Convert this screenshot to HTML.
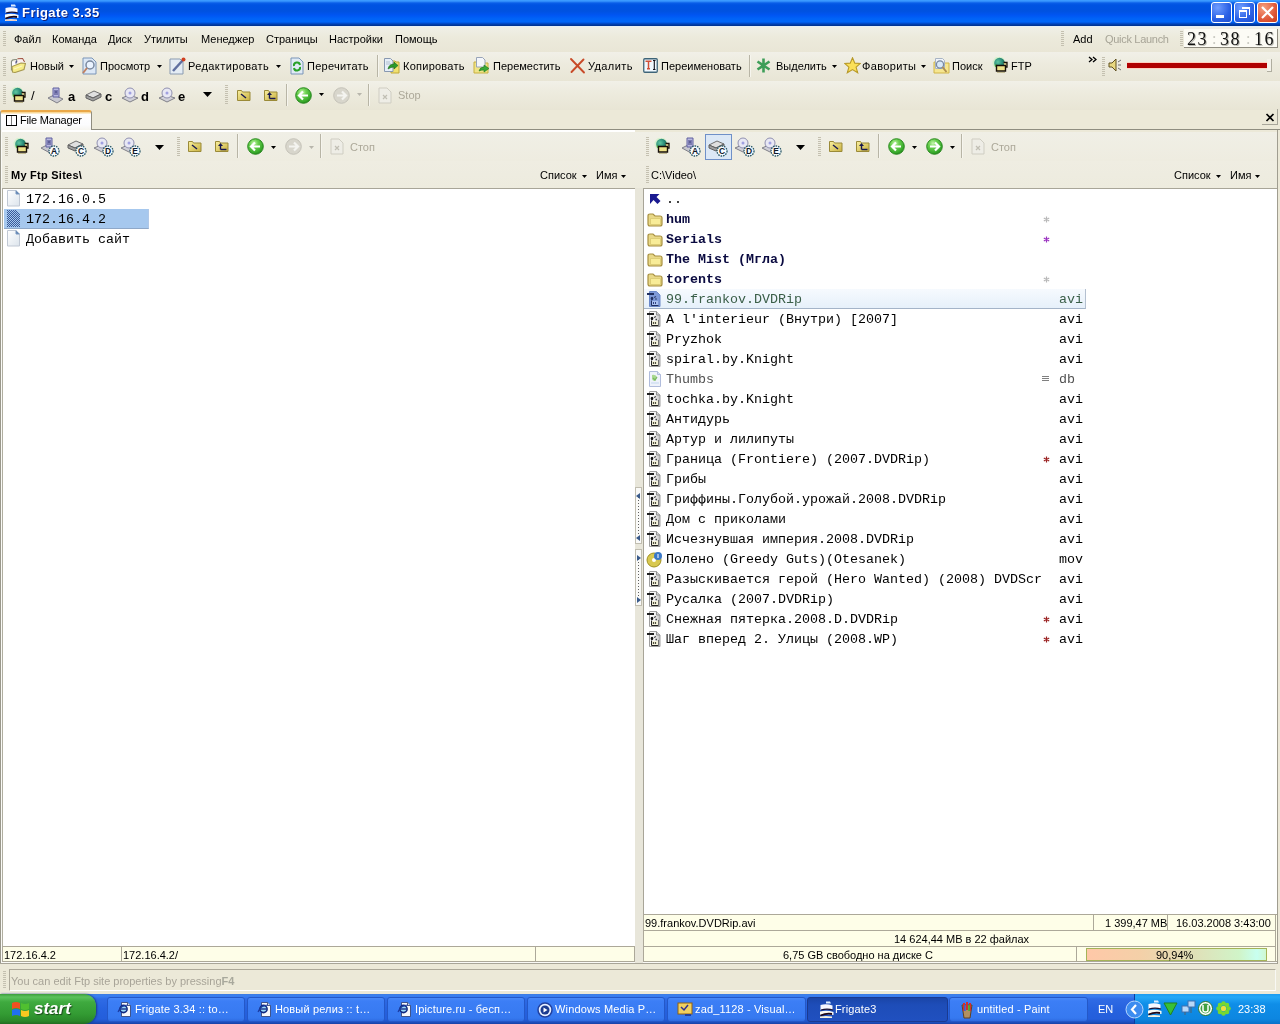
<!DOCTYPE html><html><head><meta charset="utf-8"><style>
*{margin:0;padding:0;box-sizing:border-box}
html,body{-webkit-font-smoothing:antialiased;width:1280px;height:1024px;overflow:hidden;background:#ECE9D8;font-family:"Liberation Sans",sans-serif;font-size:11px;color:#000;position:relative}
div,span,svg{position:absolute}
.t{white-space:pre;line-height:13px;will-change:transform}
.grip{width:3px;background:repeating-linear-gradient(#C4C0B0 0 1px,transparent 1px 2px)}
.sep{width:2px;border-left:1px solid #B8B5A6;border-right:1px solid #F6F5EE}
.mono{will-change:transform;font-family:"Liberation Mono",monospace;font-size:13.33px;line-height:20px;white-space:pre;padding-top:1px}
.it{height:20px}
</style></head><body><div style="left:0;top:0;width:1280px;height:26px;background:linear-gradient(#3D9CFF 0px,#3A98FF 1px,#0A5EE8 3px,#0053E2 5px,#0052E0 11px,#0055F2 15px,#0064F8 19px,#0066F8 22px,#0050D8 23px,#00389C 25px,#003090 26px)"></div><div style="left:0;top:26px;width:1280px;height:1px;background:#E6F0F6"></div><svg style="left:2px;top:3px" width="17" height="18" viewBox="0 0 17 18"><path d="M9 1.5h4l1 2H9z" fill="#DDEEFF"/><path d="M3.5 5q6-1.5 12 .5v4.5q-6-1.5-12 0z" fill="#F8F8FF"/><path d="M4 10q6-1.8 12 0" stroke="#1A1030" stroke-width="1.3" fill="none"/><path d="M3 11.5q7-1.5 13.5 .5v3q-7-1.5-13.5 0z" fill="#FAFAF4"/><path d="M3.5 15.5q6-2.5 11.5-1.5" stroke="#200818" stroke-width="1.8" fill="none"/><path d="M3 16.5q6-1 12 0v1.5H3z" fill="#F4F0E0"/><path d="M3.5 17.2h11" stroke="#E0A0A0" stroke-width=".6"/></svg><div class="t" style="left:22px;top:6px;font-weight:bold;font-size:13px;color:#fff;text-shadow:1px 1px 0 #0F1F77;letter-spacing:0.45px">Frigate 3.35</div><div style="left:1211px;top:2px;width:21px;height:21px;border:1px solid #fff;border-radius:3px;background:radial-gradient(circle at 30% 25%,#6F9DFF,#2B61E5 60%,#1E4FCF)"></div><div style="left:1234px;top:2px;width:21px;height:21px;border:1px solid #fff;border-radius:3px;background:radial-gradient(circle at 30% 25%,#6F9DFF,#2B61E5 60%,#1E4FCF)"></div><div style="left:1257px;top:2px;width:21px;height:21px;border:1px solid #fff;border-radius:3px;background:radial-gradient(circle at 30% 25%,#F5A07F,#E0593A 60%,#C73B1A)"></div><div style="left:1216px;top:15px;width:8px;height:3px;background:#fff"></div><div style="left:1239px;top:10px;width:8px;height:8px;border:1px solid #fff;border-top-width:2px"></div><div style="left:1242px;top:7px;width:8px;height:8px;border:1px solid #fff;border-top-width:2px;border-left:none;border-bottom:none"></div><svg style="left:1257px;top:2px" width="21" height="21"><path d="M5 5L16 16M16 5L5 16" stroke="#fff" stroke-width="2.2"/></svg><div style="left:0;top:27px;width:1280px;height:25px;background:linear-gradient(#F0EFE8,#ECEADC 40%,#E9E6D6)"></div><div style="left:0;top:52px;width:1280px;height:29px;background:linear-gradient(#F1F0E8,#EDEBDE 40%,#E8E5D5)"></div><div style="left:0;top:81px;width:1280px;height:29px;background:linear-gradient(#F1F0E8,#EDEBDE 40%,#E8E5D5)"></div><div class="grip" style="left:3px;top:31px;height:15px"></div><div class="t" style="left:14px;top:33px;">Файл</div><div class="t" style="left:52px;top:33px;">Команда</div><div class="t" style="left:108px;top:33px;">Диск</div><div class="t" style="left:144px;top:33px;">Утилиты</div><div class="t" style="left:201px;top:33px;">Менеджер</div><div class="t" style="left:266px;top:33px;">Страницы</div><div class="t" style="left:329px;top:33px;">Настройки</div><div class="t" style="left:395px;top:33px;">Помощь</div><div class="grip" style="left:1061px;top:31px;height:15px"></div><div class="t" style="left:1073px;top:33px;">Add</div><div class="t" style="left:1105px;top:33px;color:#A7A497;letter-spacing:-0.3px">Quick Launch</div><div class="grip" style="left:1180px;top:31px;height:15px"></div><div style="left:1184px;top:29px;width:94px;height:19px;background:#FCFBF5;border-right:1px solid #8F8C80;border-bottom:1px solid #8F8C80"></div><div class="t" style="left:1187px;top:30px;font-family:'Liberation Serif',serif;font-size:18px;line-height:18px;letter-spacing:1.5px;color:#111;text-shadow:1px 1px 0 #B8B8B0">23</div><div class="t" style="left:1220px;top:30px;font-family:'Liberation Serif',serif;font-size:18px;line-height:18px;letter-spacing:1.5px;color:#111;text-shadow:1px 1px 0 #B8B8B0">38</div><div class="t" style="left:1254px;top:30px;font-family:'Liberation Serif',serif;font-size:18px;line-height:18px;letter-spacing:1.5px;color:#111;text-shadow:1px 1px 0 #B8B8B0">16</div><div class="t" style="left:1212px;top:30px;font-family:'Liberation Serif',serif;font-size:16px;line-height:18px;color:#C8C8C0">:</div><div class="t" style="left:1246px;top:30px;font-family:'Liberation Serif',serif;font-size:16px;line-height:18px;color:#C8C8C0">:</div><div class="grip" style="left:3px;top:57px;height:19px"></div><svg style="left:8px;top:55px" width="18" height="18" viewBox="0 0 18 18"><path d="M3.5 15.5V6.5Q4 4.5 7 4.5h2" fill="none" stroke="#8A9080" stroke-width="1.2"/><path d="M4 6.5h5v6H4z" fill="#FCFCFF"/><path d="M8 8.5q0-2 1-3" stroke="#5A5A88" stroke-width="1.5" fill="none"/><path d="M9.5 3.8l5-.3 2 3.5" stroke="#A05040" stroke-width="1.2" fill="none"/><path d="M10 4.5h4.5l1.5 3-6 1z" fill="#FAF0F0"/><path d="M4.5 17L4 11.5l9-3.5 4.5 0.5-1.5 6-9 3z" fill="#F6EC88" stroke="#A89A50" stroke-width="1.1"/><path d="M6 14l8-3" stroke="#FCF8C0" stroke-width="1.2"/></svg><div class="t" style="left:30px;top:60px;">Новый</div><svg style="left:69px;top:65px" width="5" height="3" viewBox="0 0 5 3"><path d="M0 0H5L2.5 3Z" fill="#000"/></svg><svg style="left:82px;top:57px" width="16" height="18" viewBox="0 0 16 18"><path d="M1 1h9l4 4v12H1z" fill="#DCE8F6" stroke="#7A95B8"/><circle cx="8" cy="8" r="4" fill="#EAF3FF" stroke="#7A8AA0" stroke-width="1.5"/><path d="M5 11L1 16" stroke="#C08060" stroke-width="2"/></svg><div class="t" style="left:100px;top:60px;">Просмотр</div><svg style="left:157px;top:65px" width="5" height="3" viewBox="0 0 5 3"><path d="M0 0H5L2.5 3Z" fill="#000"/></svg><svg style="left:169px;top:57px" width="17" height="18" viewBox="0 0 17 18"><path d="M1 2h10l3 3v12H1z" fill="#E4ECF4" stroke="#8A9AB0"/><path d="M4 14L14 3" stroke="#6070A0" stroke-width="2.5"/><circle cx="14.5" cy="2.5" r="2" fill="#D04020"/></svg><div class="t" style="left:188px;top:60px;letter-spacing:0.4px">Редактировать</div><svg style="left:276px;top:65px" width="5" height="3" viewBox="0 0 5 3"><path d="M0 0H5L2.5 3Z" fill="#000"/></svg><svg style="left:290px;top:57px" width="14" height="18" viewBox="0 0 14 18"><path d="M1 1h8l4 4v12H1z" fill="#E0EAF4" stroke="#7A95B8"/><path d="M4 9a3 3 0 0 1 6-1" stroke="#28A028" stroke-width="2" fill="none"/><path d="M10 10a3 3 0 0 1-6 1" stroke="#28A028" stroke-width="2" fill="none"/></svg><div class="t" style="left:307px;top:60px;letter-spacing:0.25px">Перечитать</div><div class="sep" style="left:377px;top:55px;height:22px"></div><svg style="left:383px;top:57px" width="17" height="17" viewBox="0 0 17 17"><path d="M8 4h4l1 1h3v11H8z" fill="#F0E070" stroke="#C0A838"/><path d="M1.5 1.5h6l2.5 2.5v10.5H1.5z" fill="#E6EEF8" stroke="#8898B0"/><path d="M3 5h4M3 7h5" stroke="#B0C0D0"/><path d="M5 12q1-5 6-5V5l4 3.5-4 3.5v-2q-3 0-6 2z" fill="#2A9A2A" stroke="#1A6A1A" stroke-width=".6"/></svg><div class="t" style="left:403px;top:60px;letter-spacing:0.25px">Копировать</div><svg style="left:473px;top:57px" width="17" height="17" viewBox="0 0 17 17"><path d="M1 5h5l1 1h8v10H1z" fill="#F0E488" stroke="#C8B040"/><path d="M3.5 0.5h6l2.5 2.5v7H3.5z" fill="#F4F6FA" stroke="#98A4B8"/><path d="M6 14q1-4 5-4V8l5 3.5-5 3.5v-2q-3 0-5 1z" fill="#3AA83A" stroke="#1A7A1A" stroke-width=".6"/></svg><div class="t" style="left:493px;top:60px;">Переместить</div><svg style="left:569px;top:57px" width="17" height="17" viewBox="0 0 17 17"><path d="M2 2L15 15.5M14.5 2.5L2.5 15" stroke="#C84A28" stroke-width="1.9" stroke-linecap="round"/></svg><div class="t" style="left:588px;top:60px;letter-spacing:0.4px">Удалить</div><svg style="left:643px;top:58px" width="15" height="15" viewBox="0 0 15 15"><rect x="0.75" y="0.75" width="13.5" height="13.5" rx="1" fill="#F0F8FE" stroke="#3E6478" stroke-width="1.3"/><path d="M2.5 3.2h6M5.5 3.2v7.5M4 10.7h3" stroke="#D05038" stroke-width="1.5"/><path d="M10 2.5h2.5M10 11.5h2.5M11.3 2.5v9" stroke="#101018" stroke-width="1.1"/></svg><div class="t" style="left:661px;top:60px;">Переименовать</div><div class="sep" style="left:749px;top:55px;height:22px"></div><svg style="left:756px;top:58px" width="16" height="15" viewBox="0 0 16 15"><path d="M7.5 0.5V14.5M1.5 3.5L13.5 11.5M13.5 3.5L1.5 11.5" stroke="#3E9E58" stroke-width="2.6"/></svg><div class="t" style="left:776px;top:60px;">Выделить</div><svg style="left:832px;top:65px" width="5" height="3" viewBox="0 0 5 3"><path d="M0 0H5L2.5 3Z" fill="#000"/></svg><svg style="left:844px;top:57px" width="17" height="17" viewBox="0 0 17 17"><path d="M8.5 0.8l2.3 5.3 5.6.3-4.3 3.7 1.6 5.7-5.2-3.2-5.2 3.2 1.6-5.7-4.3-3.7 5.6-.3z" fill="#FBE058" stroke="#B89A28" stroke-width="1.1"/></svg><div class="t" style="left:862px;top:60px;letter-spacing:0.35px">Фавориты</div><svg style="left:921px;top:65px" width="5" height="3" viewBox="0 0 5 3"><path d="M0 0H5L2.5 3Z" fill="#000"/></svg><svg style="left:933px;top:57px" width="17" height="17" viewBox="0 0 17 17"><path d="M1 5h4l1 1h10v10H1z" fill="#F6E690" stroke="#D0B448"/><path d="M2.5 1.5h7l2 2v8h-9z" fill="#F0F4FA" stroke="#A8B4C4"/><circle cx="7" cy="7.5" r="3.6" fill="#D8E8F8" stroke="#7888A0" stroke-width="1.3"/><path d="M9.5 10l4 5" stroke="#B09050" stroke-width="2"/></svg><div class="t" style="left:952px;top:60px;">Поиск</div><svg style="left:992px;top:57px" width="17" height="17" viewBox="0 0 17 17"><defs><radialGradient id="glb" cx="35%" cy="40%" r="70%"><stop offset="0" stop-color="#60C8A0"/><stop offset="0.6" stop-color="#2A8A78"/><stop offset="1" stop-color="#1A6A50"/></radialGradient></defs><circle cx="7" cy="6" r="6.5" fill="#C8F4C0" opacity=".6"/><circle cx="7.5" cy="6" r="5.3" fill="url(#glb)"/><path d="M3 8q2 1 3 3" stroke="#50B040" stroke-width="2" fill="none"/><path d="M11.5 5.5h3.5v4.5h-2" fill="#F4E8A0" stroke="#181008" stroke-width="1.3"/><path d="M4.5 8.5h9v5.5h-9z" fill="#EEE28A" stroke="#181008" stroke-width="1.4"/><path d="M5 15.5h8" stroke="#C0B890" stroke-width="1"/></svg><div class="t" style="left:1011px;top:60px;">FTP</div><svg style="left:1088px;top:56px" width="9" height="7" viewBox="0 0 9 7"><path d="M1 1l3 2.5-3 2.5M5 1l3 2.5-3 2.5" stroke="#000" stroke-width="1.3" fill="none"/></svg><div class="grip" style="left:1102px;top:57px;height:19px"></div><svg style="left:1108px;top:58px" width="14" height="14" viewBox="0 0 14 14"><path d="M1 5h3l4-4v12l-4-4H1z" fill="#E8D880" stroke="#605020"/><path d="M10 4l3-2M10 7h3M10 10l3 2" stroke="#707070"/></svg><div style="left:1127px;top:62px;width:141px;height:7px;background:#B00000;border-top:1px solid #FFD0C0;border-bottom:1px solid #FFD0C0"></div><div style="left:1267px;top:59px;width:5px;height:13px;background:#F4F2EA;border-right:1px solid #B0AEA0;border-bottom:1px solid #B0AEA0"></div><div class="grip" style="left:3px;top:85px;height:19px"></div><svg style="left:10px;top:87px" width="17" height="17" viewBox="0 0 17 17"><defs><radialGradient id="glb" cx="35%" cy="40%" r="70%"><stop offset="0" stop-color="#60C8A0"/><stop offset="0.6" stop-color="#2A8A78"/><stop offset="1" stop-color="#1A6A50"/></radialGradient></defs><circle cx="7" cy="6" r="6.5" fill="#C8F4C0" opacity=".6"/><circle cx="7.5" cy="6" r="5.3" fill="url(#glb)"/><path d="M3 8q2 1 3 3" stroke="#50B040" stroke-width="2" fill="none"/><path d="M11.5 5.5h3.5v4.5h-2" fill="#F4E8A0" stroke="#181008" stroke-width="1.3"/><path d="M4.5 8.5h9v5.5h-9z" fill="#EEE28A" stroke="#181008" stroke-width="1.4"/><path d="M5 15.5h8" stroke="#C0B890" stroke-width="1"/></svg><div class="t" style="left:31px;top:89px;font-size:13px;font-weight:300">/</div><svg style="left:47px;top:87px" width="17" height="17" viewBox="0 0 17 17"><path d="M1 11l6-3 9 4-6 4z" fill="#C8C8D0" stroke="#808088"/><path d="M6 1h6v9H6z" fill="#B8B8E0" stroke="#6060A0"/><path d="M8 3v5M10 3v5M8 5h2" stroke="#404080"/></svg><div class="t" style="left:68px;top:90px;font-weight:bold;font-size:13px">a</div><svg style="left:85px;top:87px" width="17" height="17" viewBox="0 0 17 17"><path d="M1 8l8-4 7 3-8 4z" fill="#E0E0E0" stroke="#707070"/><path d="M1 8v3l7 3 8-4V7l-8 4z" fill="#A0A0A0" stroke="#606060"/></svg><div class="t" style="left:105px;top:90px;font-weight:bold;font-size:13px">c</div><svg style="left:121px;top:87px" width="18" height="17" viewBox="0 0 18 17"><path d="M1 11l7-3 9 3-8 4z" fill="#D0D0D8" stroke="#808088"/><ellipse cx="9" cy="6" rx="5" ry="5" fill="#E8E8F4" stroke="#9090B0"/><circle cx="9" cy="6" r="1.5" fill="#A0A0E0"/></svg><div class="t" style="left:141px;top:90px;font-weight:bold;font-size:13px">d</div><svg style="left:158px;top:87px" width="18" height="17" viewBox="0 0 18 17"><path d="M1 11l7-3 9 3-8 4z" fill="#D0D0D8" stroke="#808088"/><ellipse cx="9" cy="6" rx="5" ry="5" fill="#E8E8F4" stroke="#9090B0"/><circle cx="9" cy="6" r="1.5" fill="#A0A0E0"/></svg><div class="t" style="left:178px;top:90px;font-weight:bold;font-size:13px">e</div><svg style="left:203px;top:92px" width="9" height="5" viewBox="0 0 9 5"><path d="M0 0H9L4.5 5Z" fill="#000"/></svg><div class="grip" style="left:225px;top:85px;height:19px"></div><svg style="left:236px;top:88px" width="16" height="14" viewBox="0 0 16 14"><defs><linearGradient id="yf" x1="0" y1="0" x2="1" y2="1"><stop offset="0" stop-color="#FAF0A0"/><stop offset="1" stop-color="#C8B040"/></linearGradient></defs><path d="M1.5 2.5h4l1 1.5h7.5v8.5h-12.5z" fill="url(#yf)" stroke="#9A8A38"/><path d="M5 6l5 4" stroke="#181850" stroke-width="1.5"/></svg><svg style="left:263px;top:88px" width="16" height="14" viewBox="0 0 16 14"><path d="M1.5 2.5h4l1 1.5h7.5v8.5h-12.5z" fill="url(#yf)" stroke="#9A8A38"/><path d="M6.5 10.5h6M6.5 10.5V6" stroke="#181850" stroke-width="1.4" fill="none"/><path d="M4 7l2.5-3 2.5 3z" fill="#181850"/></svg><div class="sep" style="left:286px;top:84px;height:22px"></div><svg style="left:295px;top:87px" width="17" height="17" viewBox="0 0 17 17"><defs><radialGradient id="gb" cx="40%" cy="30%" r="75%"><stop offset="0" stop-color="#C8F8B0"/><stop offset="0.35" stop-color="#6CD050"/><stop offset="0.8" stop-color="#36A82A"/><stop offset="1" stop-color="#207A18"/></radialGradient></defs><circle cx="8.5" cy="8.5" r="7.8" fill="url(#gb)" stroke="#2A8A20"/><path d="M13 8.5H4M8 4.5l-4 4 4 4" stroke="#fff" stroke-width="2.2" fill="none"/></svg><svg style="left:319px;top:93px" width="5" height="3" viewBox="0 0 5 3"><path d="M0 0H5L2.5 3Z" fill="#000"/></svg><svg style="left:333px;top:87px" width="17" height="17" viewBox="0 0 17 17"><circle cx="8.5" cy="8.5" r="7.8" fill="#D8D6CC" stroke="#C4C2B8"/><path d="M4 8.5h9M9 4.5l4 4-4 4" stroke="#F4F4F0" stroke-width="2.2" fill="none"/></svg><svg style="left:357px;top:93px" width="5" height="3" viewBox="0 0 5 3"><path d="M0 0H5L2.5 3Z" fill="#B8B6AC"/></svg><div class="sep" style="left:368px;top:84px;height:22px"></div><svg style="left:378px;top:87px" width="14" height="17" viewBox="0 0 14 17"><path d="M1 1h8l4 4v11H1z" fill="#EEEDE6" stroke="#CFCDC2"/><path d="M5 8l4 4M9 8l-4 4" stroke="#C0BEB4" stroke-width="1.2"/></svg><div class="t" style="left:398px;top:89px;color:#ACA899">Stop</div><div style="left:0;top:129px;width:1280px;height:1px;background:#8F8D80"></div><div style="left:0;top:110px;width:92px;height:20px;background:linear-gradient(#F8D898 0,#F8D898 1px,#FFFFFF 2px,#FCFCFE 70%,#F6F5F0);border-left:1px solid #919B9C;border-right:1px solid #8F8D80;border-top:2px solid #EAA848;border-radius:3px 3px 0 0"></div><div style="left:6px;top:115px;width:11px;height:11px;border:1px solid #000"></div><div style="left:11px;top:116px;width:1px;height:9px;background:#777"></div><div class="t" style="left:20px;top:114px;letter-spacing:-0.2px">File Manager</div><svg style="left:1264px;top:111px" width="12" height="12" viewBox="0 0 12 12"><path d="M2.5 3l7 7M9.5 3l-7 7" stroke="#000" stroke-width="1.7"/></svg><div style="left:1262px;top:109px;width:16px;height:16px;border-right:1px solid #A8A69A;border-bottom:1px solid #A8A69A"></div><div style="left:0;top:130px;width:1px;height:834px;background:#9A988C"></div><div style="left:1px;top:130px;width:1px;height:834px;background:#FAFAF6"></div><div style="left:2px;top:130px;width:633px;height:2px;background:#fff"></div><div style="left:2px;top:132px;width:1275px;height:29px;background:linear-gradient(#F0EFE6,#EEECE0)"></div><div style="left:2px;top:161px;width:1275px;height:27px;background:linear-gradient(#EFEDE2,#EDEBDE)"></div><div class="grip" style="left:5px;top:137px;height:19px"></div><svg style="left:13px;top:138px" width="17" height="17" viewBox="0 0 17 17"><defs><radialGradient id="glb" cx="35%" cy="40%" r="70%"><stop offset="0" stop-color="#60C8A0"/><stop offset="0.6" stop-color="#2A8A78"/><stop offset="1" stop-color="#1A6A50"/></radialGradient></defs><circle cx="7" cy="6" r="6.5" fill="#C8F4C0" opacity=".6"/><circle cx="7.5" cy="6" r="5.3" fill="url(#glb)"/><path d="M3 8q2 1 3 3" stroke="#50B040" stroke-width="2" fill="none"/><path d="M11.5 5.5h3.5v4.5h-2" fill="#F4E8A0" stroke="#181008" stroke-width="1.3"/><path d="M4.5 8.5h9v5.5h-9z" fill="#EEE28A" stroke="#181008" stroke-width="1.4"/><path d="M5 15.5h8" stroke="#C0B890" stroke-width="1"/></svg><svg style="left:40px;top:137px" width="17" height="17" viewBox="0 0 17 17"><path d="M1 11l6-3 9 4-6 4z" fill="#C8C8D0" stroke="#808088"/><path d="M6 1h6v9H6z" fill="#B8B8E0" stroke="#6060A0"/><path d="M8 3v5M10 3v5M8 5h2" stroke="#404080"/></svg><svg style="left:48px;top:145px" width="12" height="12" viewBox="0 0 12 12"><circle cx="6" cy="6" r="5" fill="#F8FCFF" stroke="#2A5868" stroke-width="1.3" stroke-dasharray="1.6 0.9"/><text x="6" y="9" font-family="Liberation Sans" font-weight="bold" font-size="8.5" text-anchor="middle" fill="#101828">A</text></svg><svg style="left:67px;top:137px" width="17" height="17" viewBox="0 0 17 17"><path d="M1 8l8-4 7 3-8 4z" fill="#E0E0E0" stroke="#707070"/><path d="M1 8v3l7 3 8-4V7l-8 4z" fill="#A0A0A0" stroke="#606060"/></svg><svg style="left:75px;top:145px" width="12" height="12" viewBox="0 0 12 12"><circle cx="6" cy="6" r="5" fill="#F8FCFF" stroke="#2A5868" stroke-width="1.3" stroke-dasharray="1.6 0.9"/><text x="6" y="9" font-family="Liberation Sans" font-weight="bold" font-size="8.5" text-anchor="middle" fill="#101828">C</text></svg><svg style="left:93px;top:137px" width="18" height="17" viewBox="0 0 18 17"><path d="M1 11l7-3 9 3-8 4z" fill="#D0D0D8" stroke="#808088"/><ellipse cx="9" cy="6" rx="5" ry="5" fill="#E8E8F4" stroke="#9090B0"/><circle cx="9" cy="6" r="1.5" fill="#A0A0E0"/></svg><svg style="left:102px;top:145px" width="12" height="12" viewBox="0 0 12 12"><circle cx="6" cy="6" r="5" fill="#F8FCFF" stroke="#2A5868" stroke-width="1.3" stroke-dasharray="1.6 0.9"/><text x="6" y="9" font-family="Liberation Sans" font-weight="bold" font-size="8.5" text-anchor="middle" fill="#101828">D</text></svg><svg style="left:120px;top:137px" width="18" height="17" viewBox="0 0 18 17"><path d="M1 11l7-3 9 3-8 4z" fill="#D0D0D8" stroke="#808088"/><ellipse cx="9" cy="6" rx="5" ry="5" fill="#E8E8F4" stroke="#9090B0"/><circle cx="9" cy="6" r="1.5" fill="#A0A0E0"/></svg><svg style="left:129px;top:145px" width="12" height="12" viewBox="0 0 12 12"><circle cx="6" cy="6" r="5" fill="#F8FCFF" stroke="#2A5868" stroke-width="1.3" stroke-dasharray="1.6 0.9"/><text x="6" y="9" font-family="Liberation Sans" font-weight="bold" font-size="8.5" text-anchor="middle" fill="#101828">E</text></svg><svg style="left:155px;top:145px" width="9" height="5" viewBox="0 0 9 5"><path d="M0 0H9L4.5 5Z" fill="#000"/></svg><div class="grip" style="left:177px;top:137px;height:19px"></div><svg style="left:187px;top:139px" width="16" height="14" viewBox="0 0 16 14"><defs><linearGradient id="yf" x1="0" y1="0" x2="1" y2="1"><stop offset="0" stop-color="#FAF0A0"/><stop offset="1" stop-color="#C8B040"/></linearGradient></defs><path d="M1.5 2.5h4l1 1.5h7.5v8.5h-12.5z" fill="url(#yf)" stroke="#9A8A38"/><path d="M5 6l5 4" stroke="#181850" stroke-width="1.5"/></svg><svg style="left:214px;top:139px" width="16" height="14" viewBox="0 0 16 14"><path d="M1.5 2.5h4l1 1.5h7.5v8.5h-12.5z" fill="url(#yf)" stroke="#9A8A38"/><path d="M6.5 10.5h6M6.5 10.5V6" stroke="#181850" stroke-width="1.4" fill="none"/><path d="M4 7l2.5-3 2.5 3z" fill="#181850"/></svg><div class="sep" style="left:237px;top:134px;height:24px"></div><svg style="left:247px;top:138px" width="17" height="17" viewBox="0 0 17 17"><defs><radialGradient id="gb" cx="40%" cy="30%" r="75%"><stop offset="0" stop-color="#C8F8B0"/><stop offset="0.35" stop-color="#6CD050"/><stop offset="0.8" stop-color="#36A82A"/><stop offset="1" stop-color="#207A18"/></radialGradient></defs><circle cx="8.5" cy="8.5" r="7.8" fill="url(#gb)" stroke="#2A8A20"/><path d="M13 8.5H4M8 4.5l-4 4 4 4" stroke="#fff" stroke-width="2.2" fill="none"/></svg><svg style="left:271px;top:146px" width="5" height="3" viewBox="0 0 5 3"><path d="M0 0H5L2.5 3Z" fill="#000"/></svg><svg style="left:285px;top:138px" width="17" height="17" viewBox="0 0 17 17"><circle cx="8.5" cy="8.5" r="7.8" fill="#D8D6CC" stroke="#C4C2B8"/><path d="M4 8.5h9M9 4.5l4 4-4 4" stroke="#F4F4F0" stroke-width="2.2" fill="none"/></svg><svg style="left:309px;top:146px" width="5" height="3" viewBox="0 0 5 3"><path d="M0 0H5L2.5 3Z" fill="#B8B6AC"/></svg><div class="sep" style="left:320px;top:134px;height:24px"></div><svg style="left:330px;top:138px" width="14" height="17" viewBox="0 0 14 17"><path d="M1 1h8l4 4v11H1z" fill="#EEEDE6" stroke="#CFCDC2"/><path d="M5 8l4 4M9 8l-4 4" stroke="#C0BEB4" stroke-width="1.2"/></svg><div class="t" style="left:350px;top:141px;color:#ACA899">Стоп</div><div class="grip" style="left:5px;top:166px;height:17px"></div><div class="t" style="left:11px;top:169px;font-weight:bold;letter-spacing:0.25px">My Ftp Sites\</div><div class="t" style="left:540px;top:169px;">Список</div><svg style="left:582px;top:175px" width="5" height="3" viewBox="0 0 5 3"><path d="M0 0H5L2.5 3Z" fill="#000"/></svg><div class="t" style="left:596px;top:169px;">Имя</div><svg style="left:621px;top:175px" width="5" height="3" viewBox="0 0 5 3"><path d="M0 0H5L2.5 3Z" fill="#000"/></svg><div style="left:2px;top:188px;width:633px;height:758px;background:#fff;border-top:1px solid #A8A598;border-left:1px solid #B0AEA0"></div><div style="left:4px;top:209px;width:145px;height:20px;background:#A6C8EE;border-bottom:1px solid #8FA8C8;border-right:1px solid #B0C8E8"></div><svg style="left:7px;top:190px" width="14" height="17" viewBox="0 0 14 17"><defs><linearGradient id="fg" x1="0" y1="0" x2="1" y2="1"><stop offset="0" stop-color="#fff"/><stop offset="1" stop-color="#DCE4EC"/></linearGradient></defs><path d="M0.5 0.5h8.5l3.5 3.5v12h-12z" fill="url(#fg)" stroke="#C0C8D4"/><path d="M9 0.5v3.5h3.5" fill="#5A80B0" stroke="#7A98C0"/></svg><div class="mono" style="left:26px;top:189px">172.16.0.5</div><svg style="left:7px;top:210px" width="14" height="17" viewBox="0 0 14 17"><defs><pattern id="dth" width="2" height="2" patternUnits="userSpaceOnUse"><rect width="1" height="1" fill="#3A5A9A"/><rect x="1" y="1" width="1" height="1" fill="#3A5A9A"/></pattern></defs><path d="M0 0h9l4 4v13H0z" fill="url(#dth)"/></svg><div class="mono" style="left:26px;top:209px">172.16.4.2</div><svg style="left:7px;top:230px" width="14" height="17" viewBox="0 0 14 17"><defs><linearGradient id="fg" x1="0" y1="0" x2="1" y2="1"><stop offset="0" stop-color="#fff"/><stop offset="1" stop-color="#DCE4EC"/></linearGradient></defs><path d="M0.5 0.5h8.5l3.5 3.5v12h-12z" fill="url(#fg)" stroke="#C0C8D4"/><path d="M9 0.5v3.5h3.5" fill="#5A80B0" stroke="#7A98C0"/></svg><div class="mono" style="left:26px;top:229px">Добавить сайт</div><div style="left:2px;top:946px;width:633px;height:16px;background:#FEFEE8;border-top:1px solid #ACA899;border-bottom:1px solid #ACA899;border-left:1px solid #ACA899"></div><div style="left:121px;top:947px;width:1px;height:14px;background:#ACA899"></div><div style="left:535px;top:947px;width:1px;height:14px;background:#ACA899"></div><div style="left:634px;top:946px;width:1px;height:16px;background:#ACA899"></div><div class="t" style="left:4px;top:949px;">172.16.4.2</div><div class="t" style="left:123px;top:949px;">172.16.4.2/</div><div style="left:1px;top:962px;width:1277px;height:1px;background:#FAFAF6"></div><div style="left:0;top:963px;width:1278px;height:1px;background:#A8A598"></div><div style="left:635px;top:188px;width:8px;height:775px;background:#E8E6DA"></div><div style="left:635px;top:487px;width:7px;height:57px;background:#FAFAF8;border:1px solid #C0BDB0"></div><div style="left:638px;top:497px;width:1px;height:37px;background:repeating-linear-gradient(#606060 0 1px,transparent 1px 3px)"></div><div style="left:635px;top:549px;width:7px;height:57px;background:#FAFAF8;border:1px solid #C0BDB0"></div><div style="left:638px;top:559px;width:1px;height:37px;background:repeating-linear-gradient(#606060 0 1px,transparent 1px 3px)"></div><svg style="left:636px;top:493px" width="5" height="6" viewBox="0 0 5 6"><path d="M4 0v6L0 3z" fill="#3A5A8A"/></svg><svg style="left:636px;top:535px" width="5" height="6" viewBox="0 0 5 6"><path d="M4 0v6L0 3z" fill="#3A5A8A"/></svg><svg style="left:637px;top:555px" width="5" height="6" viewBox="0 0 5 6"><path d="M0 0v6l4-3z" fill="#3A5A8A"/></svg><svg style="left:637px;top:597px" width="5" height="6" viewBox="0 0 5 6"><path d="M0 0v6l4-3z" fill="#3A5A8A"/></svg><div style="left:1277px;top:130px;width:1px;height:834px;background:#A09D90"></div><div class="grip" style="left:646px;top:137px;height:19px"></div><svg style="left:654px;top:138px" width="17" height="17" viewBox="0 0 17 17"><defs><radialGradient id="glb" cx="35%" cy="40%" r="70%"><stop offset="0" stop-color="#60C8A0"/><stop offset="0.6" stop-color="#2A8A78"/><stop offset="1" stop-color="#1A6A50"/></radialGradient></defs><circle cx="7" cy="6" r="6.5" fill="#C8F4C0" opacity=".6"/><circle cx="7.5" cy="6" r="5.3" fill="url(#glb)"/><path d="M3 8q2 1 3 3" stroke="#50B040" stroke-width="2" fill="none"/><path d="M11.5 5.5h3.5v4.5h-2" fill="#F4E8A0" stroke="#181008" stroke-width="1.3"/><path d="M4.5 8.5h9v5.5h-9z" fill="#EEE28A" stroke="#181008" stroke-width="1.4"/><path d="M5 15.5h8" stroke="#C0B890" stroke-width="1"/></svg><svg style="left:681px;top:137px" width="17" height="17" viewBox="0 0 17 17"><path d="M1 11l6-3 9 4-6 4z" fill="#C8C8D0" stroke="#808088"/><path d="M6 1h6v9H6z" fill="#B8B8E0" stroke="#6060A0"/><path d="M8 3v5M10 3v5M8 5h2" stroke="#404080"/></svg><svg style="left:689px;top:145px" width="12" height="12" viewBox="0 0 12 12"><circle cx="6" cy="6" r="5" fill="#F8FCFF" stroke="#2A5868" stroke-width="1.3" stroke-dasharray="1.6 0.9"/><text x="6" y="9" font-family="Liberation Sans" font-weight="bold" font-size="8.5" text-anchor="middle" fill="#101828">A</text></svg><div style="left:705px;top:134px;width:27px;height:26px;background:#DCE8F6;border:1px solid #6F90C8"></div><svg style="left:708px;top:137px" width="17" height="17" viewBox="0 0 17 17"><path d="M1 8l8-4 7 3-8 4z" fill="#E0E0E0" stroke="#707070"/><path d="M1 8v3l7 3 8-4V7l-8 4z" fill="#A0A0A0" stroke="#606060"/></svg><svg style="left:716px;top:145px" width="12" height="12" viewBox="0 0 12 12"><circle cx="6" cy="6" r="5" fill="#F8FCFF" stroke="#2A5868" stroke-width="1.3" stroke-dasharray="1.6 0.9"/><text x="6" y="9" font-family="Liberation Sans" font-weight="bold" font-size="8.5" text-anchor="middle" fill="#101828">C</text></svg><svg style="left:734px;top:137px" width="18" height="17" viewBox="0 0 18 17"><path d="M1 11l7-3 9 3-8 4z" fill="#D0D0D8" stroke="#808088"/><ellipse cx="9" cy="6" rx="5" ry="5" fill="#E8E8F4" stroke="#9090B0"/><circle cx="9" cy="6" r="1.5" fill="#A0A0E0"/></svg><svg style="left:743px;top:145px" width="12" height="12" viewBox="0 0 12 12"><circle cx="6" cy="6" r="5" fill="#F8FCFF" stroke="#2A5868" stroke-width="1.3" stroke-dasharray="1.6 0.9"/><text x="6" y="9" font-family="Liberation Sans" font-weight="bold" font-size="8.5" text-anchor="middle" fill="#101828">D</text></svg><svg style="left:761px;top:137px" width="18" height="17" viewBox="0 0 18 17"><path d="M1 11l7-3 9 3-8 4z" fill="#D0D0D8" stroke="#808088"/><ellipse cx="9" cy="6" rx="5" ry="5" fill="#E8E8F4" stroke="#9090B0"/><circle cx="9" cy="6" r="1.5" fill="#A0A0E0"/></svg><svg style="left:770px;top:145px" width="12" height="12" viewBox="0 0 12 12"><circle cx="6" cy="6" r="5" fill="#F8FCFF" stroke="#2A5868" stroke-width="1.3" stroke-dasharray="1.6 0.9"/><text x="6" y="9" font-family="Liberation Sans" font-weight="bold" font-size="8.5" text-anchor="middle" fill="#101828">E</text></svg><svg style="left:796px;top:145px" width="9" height="5" viewBox="0 0 9 5"><path d="M0 0H9L4.5 5Z" fill="#000"/></svg><div class="grip" style="left:818px;top:137px;height:19px"></div><svg style="left:828px;top:139px" width="16" height="14" viewBox="0 0 16 14"><defs><linearGradient id="yf" x1="0" y1="0" x2="1" y2="1"><stop offset="0" stop-color="#FAF0A0"/><stop offset="1" stop-color="#C8B040"/></linearGradient></defs><path d="M1.5 2.5h4l1 1.5h7.5v8.5h-12.5z" fill="url(#yf)" stroke="#9A8A38"/><path d="M5 6l5 4" stroke="#181850" stroke-width="1.5"/></svg><svg style="left:855px;top:139px" width="16" height="14" viewBox="0 0 16 14"><path d="M1.5 2.5h4l1 1.5h7.5v8.5h-12.5z" fill="url(#yf)" stroke="#9A8A38"/><path d="M6.5 10.5h6M6.5 10.5V6" stroke="#181850" stroke-width="1.4" fill="none"/><path d="M4 7l2.5-3 2.5 3z" fill="#181850"/></svg><div class="sep" style="left:878px;top:134px;height:24px"></div><svg style="left:888px;top:138px" width="17" height="17" viewBox="0 0 17 17"><defs><radialGradient id="gb" cx="40%" cy="30%" r="75%"><stop offset="0" stop-color="#C8F8B0"/><stop offset="0.35" stop-color="#6CD050"/><stop offset="0.8" stop-color="#36A82A"/><stop offset="1" stop-color="#207A18"/></radialGradient></defs><circle cx="8.5" cy="8.5" r="7.8" fill="url(#gb)" stroke="#2A8A20"/><path d="M13 8.5H4M8 4.5l-4 4 4 4" stroke="#fff" stroke-width="2.2" fill="none"/></svg><svg style="left:912px;top:146px" width="5" height="3" viewBox="0 0 5 3"><path d="M0 0H5L2.5 3Z" fill="#000"/></svg><svg style="left:926px;top:138px" width="17" height="17" viewBox="0 0 17 17"><circle cx="8.5" cy="8.5" r="7.8" fill="url(#gb)" stroke="#2A8A20"/><path d="M4 8.5h9M9 4.5l4 4-4 4" stroke="#fff" stroke-width="2.2" fill="none"/></svg><svg style="left:950px;top:146px" width="5" height="3" viewBox="0 0 5 3"><path d="M0 0H5L2.5 3Z" fill="#000"/></svg><div class="sep" style="left:961px;top:134px;height:24px"></div><svg style="left:971px;top:138px" width="14" height="17" viewBox="0 0 14 17"><path d="M1 1h8l4 4v11H1z" fill="#EEEDE6" stroke="#CFCDC2"/><path d="M5 8l4 4M9 8l-4 4" stroke="#C0BEB4" stroke-width="1.2"/></svg><div class="t" style="left:991px;top:141px;color:#ACA899">Стоп</div><div class="grip" style="left:646px;top:166px;height:17px"></div><div class="t" style="left:651px;top:169px;">C:\Video\</div><div class="t" style="left:1174px;top:169px;">Список</div><svg style="left:1216px;top:175px" width="5" height="3" viewBox="0 0 5 3"><path d="M0 0H5L2.5 3Z" fill="#000"/></svg><div class="t" style="left:1230px;top:169px;">Имя</div><svg style="left:1255px;top:175px" width="5" height="3" viewBox="0 0 5 3"><path d="M0 0H5L2.5 3Z" fill="#000"/></svg><div style="left:643px;top:188px;width:634px;height:726px;background:#fff;border-top:1px solid #A8A598;border-left:1px solid #A8A598"></div><svg style="left:650px;top:194px" width="11" height="11" viewBox="0 0 11 11"><path d="M0 0h9.5L6.5 3l4 4-3 3-4-4-3.5 4z" fill="#1A1A90"/></svg><div class="mono" style="left:666px;top:189px">..</div><svg style="left:647px;top:213px" width="16" height="14" viewBox="0 0 16 14"><path d="M1 3Q1 1 3 1h3l2 2h5q2 0 2 2v6q0 2-2 2H3q-2 0-2-2z" fill="#E8D888" stroke="#A89040" stroke-width="1.2"/><path d="M3.5 5.5h10v6h-10z" fill="#F8EC98" stroke="#D8C870" stroke-width=".8"/></svg><div class="mono" style="left:666px;top:209px;font-weight:bold;color:#0A0A40">hum</div><svg style="left:1043px;top:216px" width="7" height="7" viewBox="0 0 7 7"><path d="M3.5 0.5v6M0.8 2l5.4 3M6.2 2L0.8 5" stroke="#B8B8B8" stroke-width="1.2"/></svg><svg style="left:647px;top:233px" width="16" height="14" viewBox="0 0 16 14"><path d="M1 3Q1 1 3 1h3l2 2h5q2 0 2 2v6q0 2-2 2H3q-2 0-2-2z" fill="#E8D888" stroke="#A89040" stroke-width="1.2"/><path d="M3.5 5.5h10v6h-10z" fill="#F8EC98" stroke="#D8C870" stroke-width=".8"/></svg><div class="mono" style="left:666px;top:229px;font-weight:bold;color:#0A0A40">Serials</div><svg style="left:1043px;top:236px" width="7" height="7" viewBox="0 0 7 7"><path d="M3.5 0.5v6M0.8 2l5.4 3M6.2 2L0.8 5" stroke="#9A30C0" stroke-width="1.2"/></svg><svg style="left:647px;top:253px" width="16" height="14" viewBox="0 0 16 14"><path d="M1 3Q1 1 3 1h3l2 2h5q2 0 2 2v6q0 2-2 2H3q-2 0-2-2z" fill="#E8D888" stroke="#A89040" stroke-width="1.2"/><path d="M3.5 5.5h10v6h-10z" fill="#F8EC98" stroke="#D8C870" stroke-width=".8"/></svg><div class="mono" style="left:666px;top:249px;font-weight:bold;color:#0A0A40">The Mist (Мгла)</div><svg style="left:647px;top:273px" width="16" height="14" viewBox="0 0 16 14"><path d="M1 3Q1 1 3 1h3l2 2h5q2 0 2 2v6q0 2-2 2H3q-2 0-2-2z" fill="#E8D888" stroke="#A89040" stroke-width="1.2"/><path d="M3.5 5.5h10v6h-10z" fill="#F8EC98" stroke="#D8C870" stroke-width=".8"/></svg><div class="mono" style="left:666px;top:269px;font-weight:bold;color:#0A0A40">torents</div><svg style="left:1043px;top:276px" width="7" height="7" viewBox="0 0 7 7"><path d="M3.5 0.5v6M0.8 2l5.4 3M6.2 2L0.8 5" stroke="#B8B8B8" stroke-width="1.2"/></svg><div style="left:644px;top:289px;width:442px;height:20px;background:linear-gradient(#F6FAFE,#E6F0FA);border-bottom:1px solid #A4B4C8;border-right:1px solid #B4C0D0"></div><svg style="left:647px;top:291px" width="15" height="16" viewBox="0 0 15 16"><path d="M2.5 0.5h7l3.5 3.5v11.5H2.5z" fill="#7E9AD8" stroke="#6A88C8"/><rect x="0" y="2" width="7" height="2" fill="#203060"/><ellipse cx="5" cy="7.5" rx="1.3" ry="1.8" fill="#203060"/><path d="M7 6.5l2-1M8 8h2" stroke="#304070" stroke-width="1.2"/><path d="M4.5 9.5v5h7" stroke="#203060" fill="none"/><rect x="5" y="10" width="6" height="4" fill="#A8C0F0"/><path d="M6.5 11v2M8.5 11v2" stroke="#304080"/></svg><div class="mono" style="left:666px;top:289px;color:#3A5E48">99.frankov.DVDRip</div><div class="mono" style="left:1059px;top:289px;color:#3A5E48">avi</div><svg style="left:647px;top:311px" width="15" height="16" viewBox="0 0 15 16"><defs><linearGradient id="vg" x1="0" x2="1"><stop offset="0" stop-color="#FFFFFF"/><stop offset="0.6" stop-color="#F0F0F0"/><stop offset="1" stop-color="#B8B8B8"/></linearGradient></defs><path d="M2.5 0.5h7l3.5 3.5v11.5H2.5z" fill="url(#vg)" stroke="#A0A0A0"/><path d="M9.5 0.5v3.5h3.5" fill="#D0D0D0" stroke="#909090"/><rect x="0" y="2" width="7" height="2" fill="#202020"/><ellipse cx="5" cy="7.5" rx="1.3" ry="1.8" fill="#101010"/><path d="M7 6.5l2-1M8.5 8.5h1.5" stroke="#404040" stroke-width="1.3"/><rect x="5" y="10" width="6" height="4" fill="#F4F2DC"/><path d="M4.5 9.5v5h7" stroke="#202020" fill="none"/><path d="M6.5 11v2M8.5 11v2" stroke="#505040" stroke-width="1.2"/><path d="M11.5 9v5" stroke="#707070"/></svg><div class="mono" style="left:666px;top:309px;color:#000">A l'interieur (Внутри) [2007]</div><div class="mono" style="left:1059px;top:309px;color:#000">avi</div><svg style="left:647px;top:331px" width="15" height="16" viewBox="0 0 15 16"><defs><linearGradient id="vg" x1="0" x2="1"><stop offset="0" stop-color="#FFFFFF"/><stop offset="0.6" stop-color="#F0F0F0"/><stop offset="1" stop-color="#B8B8B8"/></linearGradient></defs><path d="M2.5 0.5h7l3.5 3.5v11.5H2.5z" fill="url(#vg)" stroke="#A0A0A0"/><path d="M9.5 0.5v3.5h3.5" fill="#D0D0D0" stroke="#909090"/><rect x="0" y="2" width="7" height="2" fill="#202020"/><ellipse cx="5" cy="7.5" rx="1.3" ry="1.8" fill="#101010"/><path d="M7 6.5l2-1M8.5 8.5h1.5" stroke="#404040" stroke-width="1.3"/><rect x="5" y="10" width="6" height="4" fill="#F4F2DC"/><path d="M4.5 9.5v5h7" stroke="#202020" fill="none"/><path d="M6.5 11v2M8.5 11v2" stroke="#505040" stroke-width="1.2"/><path d="M11.5 9v5" stroke="#707070"/></svg><div class="mono" style="left:666px;top:329px;color:#000">Pryzhok</div><div class="mono" style="left:1059px;top:329px;color:#000">avi</div><svg style="left:647px;top:351px" width="15" height="16" viewBox="0 0 15 16"><defs><linearGradient id="vg" x1="0" x2="1"><stop offset="0" stop-color="#FFFFFF"/><stop offset="0.6" stop-color="#F0F0F0"/><stop offset="1" stop-color="#B8B8B8"/></linearGradient></defs><path d="M2.5 0.5h7l3.5 3.5v11.5H2.5z" fill="url(#vg)" stroke="#A0A0A0"/><path d="M9.5 0.5v3.5h3.5" fill="#D0D0D0" stroke="#909090"/><rect x="0" y="2" width="7" height="2" fill="#202020"/><ellipse cx="5" cy="7.5" rx="1.3" ry="1.8" fill="#101010"/><path d="M7 6.5l2-1M8.5 8.5h1.5" stroke="#404040" stroke-width="1.3"/><rect x="5" y="10" width="6" height="4" fill="#F4F2DC"/><path d="M4.5 9.5v5h7" stroke="#202020" fill="none"/><path d="M6.5 11v2M8.5 11v2" stroke="#505040" stroke-width="1.2"/><path d="M11.5 9v5" stroke="#707070"/></svg><div class="mono" style="left:666px;top:349px;color:#000">spiral.by.Knight</div><div class="mono" style="left:1059px;top:349px;color:#000">avi</div><svg style="left:648px;top:371px" width="14" height="16" viewBox="0 0 14 16"><path d="M1.5 0.5h8l3 3v12h-11z" fill="#EEF2FA" stroke="#B0BCDC"/><path d="M9.5 0.5v3h3" fill="#D8E0F0" stroke="#B0BCDC"/><path d="M4 4q3-1 5 2-1 3-2 4-3 0-3-3z" fill="#A8D890"/><path d="M5 7l2 2 2-3" stroke="#78B860" stroke-width="1.2" fill="none"/><path d="M3 12h8" stroke="#D8E4F4" stroke-width="2"/></svg><div class="mono" style="left:666px;top:369px;color:#505050">Thumbs</div><svg style="left:1042px;top:376px" width="8" height="6" viewBox="0 0 8 6"><path d="M0 0.5h7M0 2.5h7M0 4.5h7" stroke="#808080" stroke-width="1"/></svg><div class="mono" style="left:1059px;top:369px;color:#505050">db</div><svg style="left:647px;top:391px" width="15" height="16" viewBox="0 0 15 16"><defs><linearGradient id="vg" x1="0" x2="1"><stop offset="0" stop-color="#FFFFFF"/><stop offset="0.6" stop-color="#F0F0F0"/><stop offset="1" stop-color="#B8B8B8"/></linearGradient></defs><path d="M2.5 0.5h7l3.5 3.5v11.5H2.5z" fill="url(#vg)" stroke="#A0A0A0"/><path d="M9.5 0.5v3.5h3.5" fill="#D0D0D0" stroke="#909090"/><rect x="0" y="2" width="7" height="2" fill="#202020"/><ellipse cx="5" cy="7.5" rx="1.3" ry="1.8" fill="#101010"/><path d="M7 6.5l2-1M8.5 8.5h1.5" stroke="#404040" stroke-width="1.3"/><rect x="5" y="10" width="6" height="4" fill="#F4F2DC"/><path d="M4.5 9.5v5h7" stroke="#202020" fill="none"/><path d="M6.5 11v2M8.5 11v2" stroke="#505040" stroke-width="1.2"/><path d="M11.5 9v5" stroke="#707070"/></svg><div class="mono" style="left:666px;top:389px;color:#000">tochka.by.Knight</div><div class="mono" style="left:1059px;top:389px;color:#000">avi</div><svg style="left:647px;top:411px" width="15" height="16" viewBox="0 0 15 16"><defs><linearGradient id="vg" x1="0" x2="1"><stop offset="0" stop-color="#FFFFFF"/><stop offset="0.6" stop-color="#F0F0F0"/><stop offset="1" stop-color="#B8B8B8"/></linearGradient></defs><path d="M2.5 0.5h7l3.5 3.5v11.5H2.5z" fill="url(#vg)" stroke="#A0A0A0"/><path d="M9.5 0.5v3.5h3.5" fill="#D0D0D0" stroke="#909090"/><rect x="0" y="2" width="7" height="2" fill="#202020"/><ellipse cx="5" cy="7.5" rx="1.3" ry="1.8" fill="#101010"/><path d="M7 6.5l2-1M8.5 8.5h1.5" stroke="#404040" stroke-width="1.3"/><rect x="5" y="10" width="6" height="4" fill="#F4F2DC"/><path d="M4.5 9.5v5h7" stroke="#202020" fill="none"/><path d="M6.5 11v2M8.5 11v2" stroke="#505040" stroke-width="1.2"/><path d="M11.5 9v5" stroke="#707070"/></svg><div class="mono" style="left:666px;top:409px;color:#000">Антидурь</div><div class="mono" style="left:1059px;top:409px;color:#000">avi</div><svg style="left:647px;top:431px" width="15" height="16" viewBox="0 0 15 16"><defs><linearGradient id="vg" x1="0" x2="1"><stop offset="0" stop-color="#FFFFFF"/><stop offset="0.6" stop-color="#F0F0F0"/><stop offset="1" stop-color="#B8B8B8"/></linearGradient></defs><path d="M2.5 0.5h7l3.5 3.5v11.5H2.5z" fill="url(#vg)" stroke="#A0A0A0"/><path d="M9.5 0.5v3.5h3.5" fill="#D0D0D0" stroke="#909090"/><rect x="0" y="2" width="7" height="2" fill="#202020"/><ellipse cx="5" cy="7.5" rx="1.3" ry="1.8" fill="#101010"/><path d="M7 6.5l2-1M8.5 8.5h1.5" stroke="#404040" stroke-width="1.3"/><rect x="5" y="10" width="6" height="4" fill="#F4F2DC"/><path d="M4.5 9.5v5h7" stroke="#202020" fill="none"/><path d="M6.5 11v2M8.5 11v2" stroke="#505040" stroke-width="1.2"/><path d="M11.5 9v5" stroke="#707070"/></svg><div class="mono" style="left:666px;top:429px;color:#000">Артур и лилипуты</div><div class="mono" style="left:1059px;top:429px;color:#000">avi</div><svg style="left:647px;top:451px" width="15" height="16" viewBox="0 0 15 16"><defs><linearGradient id="vg" x1="0" x2="1"><stop offset="0" stop-color="#FFFFFF"/><stop offset="0.6" stop-color="#F0F0F0"/><stop offset="1" stop-color="#B8B8B8"/></linearGradient></defs><path d="M2.5 0.5h7l3.5 3.5v11.5H2.5z" fill="url(#vg)" stroke="#A0A0A0"/><path d="M9.5 0.5v3.5h3.5" fill="#D0D0D0" stroke="#909090"/><rect x="0" y="2" width="7" height="2" fill="#202020"/><ellipse cx="5" cy="7.5" rx="1.3" ry="1.8" fill="#101010"/><path d="M7 6.5l2-1M8.5 8.5h1.5" stroke="#404040" stroke-width="1.3"/><rect x="5" y="10" width="6" height="4" fill="#F4F2DC"/><path d="M4.5 9.5v5h7" stroke="#202020" fill="none"/><path d="M6.5 11v2M8.5 11v2" stroke="#505040" stroke-width="1.2"/><path d="M11.5 9v5" stroke="#707070"/></svg><div class="mono" style="left:666px;top:449px;color:#000">Граница (Frontiere) (2007.DVDRip)</div><svg style="left:1043px;top:456px" width="7" height="7" viewBox="0 0 7 7"><path d="M3.5 0.5v6M0.8 2l5.4 3M6.2 2L0.8 5" stroke="#9A2020" stroke-width="1.2"/></svg><div class="mono" style="left:1059px;top:449px;color:#000">avi</div><svg style="left:647px;top:471px" width="15" height="16" viewBox="0 0 15 16"><defs><linearGradient id="vg" x1="0" x2="1"><stop offset="0" stop-color="#FFFFFF"/><stop offset="0.6" stop-color="#F0F0F0"/><stop offset="1" stop-color="#B8B8B8"/></linearGradient></defs><path d="M2.5 0.5h7l3.5 3.5v11.5H2.5z" fill="url(#vg)" stroke="#A0A0A0"/><path d="M9.5 0.5v3.5h3.5" fill="#D0D0D0" stroke="#909090"/><rect x="0" y="2" width="7" height="2" fill="#202020"/><ellipse cx="5" cy="7.5" rx="1.3" ry="1.8" fill="#101010"/><path d="M7 6.5l2-1M8.5 8.5h1.5" stroke="#404040" stroke-width="1.3"/><rect x="5" y="10" width="6" height="4" fill="#F4F2DC"/><path d="M4.5 9.5v5h7" stroke="#202020" fill="none"/><path d="M6.5 11v2M8.5 11v2" stroke="#505040" stroke-width="1.2"/><path d="M11.5 9v5" stroke="#707070"/></svg><div class="mono" style="left:666px;top:469px;color:#000">Грибы</div><div class="mono" style="left:1059px;top:469px;color:#000">avi</div><svg style="left:647px;top:491px" width="15" height="16" viewBox="0 0 15 16"><defs><linearGradient id="vg" x1="0" x2="1"><stop offset="0" stop-color="#FFFFFF"/><stop offset="0.6" stop-color="#F0F0F0"/><stop offset="1" stop-color="#B8B8B8"/></linearGradient></defs><path d="M2.5 0.5h7l3.5 3.5v11.5H2.5z" fill="url(#vg)" stroke="#A0A0A0"/><path d="M9.5 0.5v3.5h3.5" fill="#D0D0D0" stroke="#909090"/><rect x="0" y="2" width="7" height="2" fill="#202020"/><ellipse cx="5" cy="7.5" rx="1.3" ry="1.8" fill="#101010"/><path d="M7 6.5l2-1M8.5 8.5h1.5" stroke="#404040" stroke-width="1.3"/><rect x="5" y="10" width="6" height="4" fill="#F4F2DC"/><path d="M4.5 9.5v5h7" stroke="#202020" fill="none"/><path d="M6.5 11v2M8.5 11v2" stroke="#505040" stroke-width="1.2"/><path d="M11.5 9v5" stroke="#707070"/></svg><div class="mono" style="left:666px;top:489px;color:#000">Гриффины.Голубой.урожай.2008.DVDRip</div><div class="mono" style="left:1059px;top:489px;color:#000">avi</div><svg style="left:647px;top:511px" width="15" height="16" viewBox="0 0 15 16"><defs><linearGradient id="vg" x1="0" x2="1"><stop offset="0" stop-color="#FFFFFF"/><stop offset="0.6" stop-color="#F0F0F0"/><stop offset="1" stop-color="#B8B8B8"/></linearGradient></defs><path d="M2.5 0.5h7l3.5 3.5v11.5H2.5z" fill="url(#vg)" stroke="#A0A0A0"/><path d="M9.5 0.5v3.5h3.5" fill="#D0D0D0" stroke="#909090"/><rect x="0" y="2" width="7" height="2" fill="#202020"/><ellipse cx="5" cy="7.5" rx="1.3" ry="1.8" fill="#101010"/><path d="M7 6.5l2-1M8.5 8.5h1.5" stroke="#404040" stroke-width="1.3"/><rect x="5" y="10" width="6" height="4" fill="#F4F2DC"/><path d="M4.5 9.5v5h7" stroke="#202020" fill="none"/><path d="M6.5 11v2M8.5 11v2" stroke="#505040" stroke-width="1.2"/><path d="M11.5 9v5" stroke="#707070"/></svg><div class="mono" style="left:666px;top:509px;color:#000">Дом с приколами</div><div class="mono" style="left:1059px;top:509px;color:#000">avi</div><svg style="left:647px;top:531px" width="15" height="16" viewBox="0 0 15 16"><defs><linearGradient id="vg" x1="0" x2="1"><stop offset="0" stop-color="#FFFFFF"/><stop offset="0.6" stop-color="#F0F0F0"/><stop offset="1" stop-color="#B8B8B8"/></linearGradient></defs><path d="M2.5 0.5h7l3.5 3.5v11.5H2.5z" fill="url(#vg)" stroke="#A0A0A0"/><path d="M9.5 0.5v3.5h3.5" fill="#D0D0D0" stroke="#909090"/><rect x="0" y="2" width="7" height="2" fill="#202020"/><ellipse cx="5" cy="7.5" rx="1.3" ry="1.8" fill="#101010"/><path d="M7 6.5l2-1M8.5 8.5h1.5" stroke="#404040" stroke-width="1.3"/><rect x="5" y="10" width="6" height="4" fill="#F4F2DC"/><path d="M4.5 9.5v5h7" stroke="#202020" fill="none"/><path d="M6.5 11v2M8.5 11v2" stroke="#505040" stroke-width="1.2"/><path d="M11.5 9v5" stroke="#707070"/></svg><div class="mono" style="left:666px;top:529px;color:#000">Исчезнувшая империя.2008.DVDRip</div><div class="mono" style="left:1059px;top:529px;color:#000">avi</div><svg style="left:646px;top:551px" width="17" height="17" viewBox="0 0 17 17"><circle cx="8" cy="9" r="7" fill="#D8C850" stroke="#A09020"/><circle cx="8" cy="9" r="2" fill="#fff"/><circle cx="12" cy="5" r="4" fill="#3A78C8"/><path d="M12 3v4" stroke="#fff"/></svg><div class="mono" style="left:666px;top:549px">Полено (Greedy Guts)(Otesanek)</div><div class="mono" style="left:1059px;top:549px;color:#000">mov</div><svg style="left:647px;top:571px" width="15" height="16" viewBox="0 0 15 16"><defs><linearGradient id="vg" x1="0" x2="1"><stop offset="0" stop-color="#FFFFFF"/><stop offset="0.6" stop-color="#F0F0F0"/><stop offset="1" stop-color="#B8B8B8"/></linearGradient></defs><path d="M2.5 0.5h7l3.5 3.5v11.5H2.5z" fill="url(#vg)" stroke="#A0A0A0"/><path d="M9.5 0.5v3.5h3.5" fill="#D0D0D0" stroke="#909090"/><rect x="0" y="2" width="7" height="2" fill="#202020"/><ellipse cx="5" cy="7.5" rx="1.3" ry="1.8" fill="#101010"/><path d="M7 6.5l2-1M8.5 8.5h1.5" stroke="#404040" stroke-width="1.3"/><rect x="5" y="10" width="6" height="4" fill="#F4F2DC"/><path d="M4.5 9.5v5h7" stroke="#202020" fill="none"/><path d="M6.5 11v2M8.5 11v2" stroke="#505040" stroke-width="1.2"/><path d="M11.5 9v5" stroke="#707070"/></svg><div class="mono" style="left:666px;top:569px;color:#000">Разыскивается герой (Hero Wanted) (2008) DVDScr</div><div class="mono" style="left:1059px;top:569px;color:#000">avi</div><svg style="left:647px;top:591px" width="15" height="16" viewBox="0 0 15 16"><defs><linearGradient id="vg" x1="0" x2="1"><stop offset="0" stop-color="#FFFFFF"/><stop offset="0.6" stop-color="#F0F0F0"/><stop offset="1" stop-color="#B8B8B8"/></linearGradient></defs><path d="M2.5 0.5h7l3.5 3.5v11.5H2.5z" fill="url(#vg)" stroke="#A0A0A0"/><path d="M9.5 0.5v3.5h3.5" fill="#D0D0D0" stroke="#909090"/><rect x="0" y="2" width="7" height="2" fill="#202020"/><ellipse cx="5" cy="7.5" rx="1.3" ry="1.8" fill="#101010"/><path d="M7 6.5l2-1M8.5 8.5h1.5" stroke="#404040" stroke-width="1.3"/><rect x="5" y="10" width="6" height="4" fill="#F4F2DC"/><path d="M4.5 9.5v5h7" stroke="#202020" fill="none"/><path d="M6.5 11v2M8.5 11v2" stroke="#505040" stroke-width="1.2"/><path d="M11.5 9v5" stroke="#707070"/></svg><div class="mono" style="left:666px;top:589px;color:#000">Русалка (2007.DVDRip)</div><div class="mono" style="left:1059px;top:589px;color:#000">avi</div><svg style="left:647px;top:611px" width="15" height="16" viewBox="0 0 15 16"><defs><linearGradient id="vg" x1="0" x2="1"><stop offset="0" stop-color="#FFFFFF"/><stop offset="0.6" stop-color="#F0F0F0"/><stop offset="1" stop-color="#B8B8B8"/></linearGradient></defs><path d="M2.5 0.5h7l3.5 3.5v11.5H2.5z" fill="url(#vg)" stroke="#A0A0A0"/><path d="M9.5 0.5v3.5h3.5" fill="#D0D0D0" stroke="#909090"/><rect x="0" y="2" width="7" height="2" fill="#202020"/><ellipse cx="5" cy="7.5" rx="1.3" ry="1.8" fill="#101010"/><path d="M7 6.5l2-1M8.5 8.5h1.5" stroke="#404040" stroke-width="1.3"/><rect x="5" y="10" width="6" height="4" fill="#F4F2DC"/><path d="M4.5 9.5v5h7" stroke="#202020" fill="none"/><path d="M6.5 11v2M8.5 11v2" stroke="#505040" stroke-width="1.2"/><path d="M11.5 9v5" stroke="#707070"/></svg><div class="mono" style="left:666px;top:609px;color:#000">Снежная пятерка.2008.D.DVDRip</div><svg style="left:1043px;top:616px" width="7" height="7" viewBox="0 0 7 7"><path d="M3.5 0.5v6M0.8 2l5.4 3M6.2 2L0.8 5" stroke="#9A2020" stroke-width="1.2"/></svg><div class="mono" style="left:1059px;top:609px;color:#000">avi</div><svg style="left:647px;top:631px" width="15" height="16" viewBox="0 0 15 16"><defs><linearGradient id="vg" x1="0" x2="1"><stop offset="0" stop-color="#FFFFFF"/><stop offset="0.6" stop-color="#F0F0F0"/><stop offset="1" stop-color="#B8B8B8"/></linearGradient></defs><path d="M2.5 0.5h7l3.5 3.5v11.5H2.5z" fill="url(#vg)" stroke="#A0A0A0"/><path d="M9.5 0.5v3.5h3.5" fill="#D0D0D0" stroke="#909090"/><rect x="0" y="2" width="7" height="2" fill="#202020"/><ellipse cx="5" cy="7.5" rx="1.3" ry="1.8" fill="#101010"/><path d="M7 6.5l2-1M8.5 8.5h1.5" stroke="#404040" stroke-width="1.3"/><rect x="5" y="10" width="6" height="4" fill="#F4F2DC"/><path d="M4.5 9.5v5h7" stroke="#202020" fill="none"/><path d="M6.5 11v2M8.5 11v2" stroke="#505040" stroke-width="1.2"/><path d="M11.5 9v5" stroke="#707070"/></svg><div class="mono" style="left:666px;top:629px;color:#000">Шаг вперед 2. Улицы (2008.WP)</div><svg style="left:1043px;top:636px" width="7" height="7" viewBox="0 0 7 7"><path d="M3.5 0.5v6M0.8 2l5.4 3M6.2 2L0.8 5" stroke="#9A2020" stroke-width="1.2"/></svg><div class="mono" style="left:1059px;top:629px;color:#000">avi</div><div style="left:643px;top:914px;width:634px;height:48px;background:#FEFEE8;border:1px solid #ACA899;border-right:none"></div><div style="left:1275px;top:914px;width:1px;height:48px;background:#ACA899"></div><div style="left:643px;top:930px;width:633px;height:1px;background:#ACA899"></div><div style="left:643px;top:946px;width:633px;height:1px;background:#ACA899"></div><div style="left:1093px;top:915px;width:1px;height:15px;background:#ACA899"></div><div style="left:1167px;top:915px;width:1px;height:15px;background:#ACA899"></div><div style="left:1076px;top:947px;width:1px;height:15px;background:#ACA899"></div><div class="t" style="left:645px;top:917px;">99.frankov.DVDRip.avi</div><div class="t" style="left:1105px;top:917px;">1 399,47 MB</div><div class="t" style="left:1176px;top:917px;">16.03.2008 3:43:00</div><div class="t" style="left:894px;top:933px;">14 624,44 MB в 22 файлах</div><div class="t" style="left:783px;top:949px;">6,75 GB свободно на диске C</div><div style="left:1086px;top:948px;width:181px;height:13px;background:linear-gradient(90deg,#FFC8A8 0%,#F4D0A8 30%,#E0E0B8 60%,#D0F4C8 85%,#C8FFF0 95%,#D0F8D0 100%);border:1px solid #A4B458"></div><div class="t" style="left:1156px;top:949px;">90,94%</div><div class="grip" style="left:3px;top:971px;height:17px"></div><div style="left:9px;top:969px;width:1267px;height:22px;border-top:1px solid #ACA899;border-left:1px solid #ACA899;border-bottom:1px solid #fff;border-right:1px solid #F8F8F4"></div><div class="t" style="left:11px;top:975px;color:#A8A498">You can edit Ftp site properties by pressing<b style="position:static;color:#A8A89C">F4</b></div><div style="left:0;top:994px;width:1280px;height:30px;background:linear-gradient(#3D7BE0 0,#3A80F3 2px,#2F6BE5 5px,#2662DF 15px,#245EDB 25px,#1E51C2 28px,#1941A5 30px)"></div><div style="left:0;top:994px;width:96px;height:30px;border-radius:0 12px 12px 0;background:linear-gradient(#3C9D3C 0,#5CC25C 3px,#3FAA3F 8px,#339B33 20px,#2A882A 27px,#216D21 30px);box-shadow:1px 0 2px #1A3A8A"></div><svg style="left:11px;top:1000px" width="19" height="18" viewBox="0 0 19 18"><path d="M1 3q4-2 8 0v6q-4-2-8 0z" fill="#F05020"/><path d="M10 3q4 2 8 0v6q-4 2-8 0z" fill="#50C030"/><path d="M1 10q4-2 8 0v6q-4-2-8 0z" fill="#2070F0"/><path d="M10 10q4 2 8 0v6q-4 2-8 0z" fill="#F8C820"/></svg><div class="t" style="left:34px;top:999px;font-style:italic;font-weight:bold;font-size:17px;line-height:20px;color:#fff;text-shadow:1px 1px 1px #1A4A1A">start</div><div style="left:107px;top:997px;width:138px;height:25px;border-radius:3px;background:linear-gradient(#4A8AF8 0,#3C7EF6 3px,#3679F0 20px,#2E6BE0 100%);border:1px solid #2458C8"></div><svg style="left:117px;top:1001px" width="16" height="17" viewBox="0 0 16 17"><path d="M4.5 1.5h6l3 3v11h-9z" fill="#F8F8FA" stroke="#2A3A70" stroke-width=".8"/><path d="M10.5 1.5v3h3" fill="#D0D8E8" stroke="#2A3A70" stroke-width=".8"/><circle cx="6.5" cy="8" r="3.6" fill="#9AD8F8" stroke="#102880" stroke-width="1.6"/><path d="M3.5 8h6" stroke="#102880" stroke-width="1.3"/><path d="M1 11q3-7 10-7" stroke="#1A3AA0" stroke-width="1.1" fill="none"/></svg><div class="t" style="left:135px;top:1003px;color:#fff;letter-spacing:0.15px">Frigate 3.34 :: to…</div><div style="left:247px;top:997px;width:138px;height:25px;border-radius:3px;background:linear-gradient(#4A8AF8 0,#3C7EF6 3px,#3679F0 20px,#2E6BE0 100%);border:1px solid #2458C8"></div><svg style="left:257px;top:1001px" width="16" height="17" viewBox="0 0 16 17"><path d="M4.5 1.5h6l3 3v11h-9z" fill="#F8F8FA" stroke="#2A3A70" stroke-width=".8"/><path d="M10.5 1.5v3h3" fill="#D0D8E8" stroke="#2A3A70" stroke-width=".8"/><circle cx="6.5" cy="8" r="3.6" fill="#9AD8F8" stroke="#102880" stroke-width="1.6"/><path d="M3.5 8h6" stroke="#102880" stroke-width="1.3"/><path d="M1 11q3-7 10-7" stroke="#1A3AA0" stroke-width="1.1" fill="none"/></svg><div class="t" style="left:275px;top:1003px;color:#fff;letter-spacing:0.15px">Новый релиз :: t…</div><div style="left:387px;top:997px;width:138px;height:25px;border-radius:3px;background:linear-gradient(#4A8AF8 0,#3C7EF6 3px,#3679F0 20px,#2E6BE0 100%);border:1px solid #2458C8"></div><svg style="left:397px;top:1001px" width="16" height="17" viewBox="0 0 16 17"><path d="M4.5 1.5h6l3 3v11h-9z" fill="#F8F8FA" stroke="#2A3A70" stroke-width=".8"/><path d="M10.5 1.5v3h3" fill="#D0D8E8" stroke="#2A3A70" stroke-width=".8"/><circle cx="6.5" cy="8" r="3.6" fill="#9AD8F8" stroke="#102880" stroke-width="1.6"/><path d="M3.5 8h6" stroke="#102880" stroke-width="1.3"/><path d="M1 11q3-7 10-7" stroke="#1A3AA0" stroke-width="1.1" fill="none"/></svg><div class="t" style="left:415px;top:1003px;color:#fff;letter-spacing:0.15px">Ipicture.ru - бесп…</div><div style="left:527px;top:997px;width:138px;height:25px;border-radius:3px;background:linear-gradient(#4A8AF8 0,#3C7EF6 3px,#3679F0 20px,#2E6BE0 100%);border:1px solid #2458C8"></div><svg style="left:537px;top:1002px" width="16" height="16" viewBox="0 0 16 16"><circle cx="8" cy="8" r="7" fill="#E8F0FF" stroke="#2040A0" stroke-width="1.5"/><circle cx="8" cy="8" r="4.5" fill="#1A3A90"/><path d="M6.5 5.5l4 2.5-4 2.5z" fill="#fff"/></svg><div class="t" style="left:555px;top:1003px;color:#fff;letter-spacing:0.15px">Windows Media P…</div><div style="left:667px;top:997px;width:139px;height:25px;border-radius:3px;background:linear-gradient(#4A8AF8 0,#3C7EF6 3px,#3679F0 20px,#2E6BE0 100%);border:1px solid #2458C8"></div><svg style="left:677px;top:1002px" width="18" height="16" viewBox="0 0 18 16"><rect x="1" y="1" width="14" height="11" fill="#F0D060" stroke="#906010"/><path d="M4 5l3 3 4-5" stroke="#303090" stroke-width="1.5" fill="none"/><path d="M8 13l6 0" stroke="#2040A0" stroke-width="2"/></svg><div class="t" style="left:695px;top:1003px;color:#fff;letter-spacing:0.15px">zad_1128 - Visual…</div><div style="left:807px;top:997px;width:141px;height:25px;border-radius:3px;background:linear-gradient(#1A45A8,#1E4DB8 30%,#2050C0);border:1px solid #1A3A90"></div><svg style="left:817px;top:1000px" width="17" height="18" viewBox="0 0 17 18"><path d="M9 1.5h4l1 2H9z" fill="#DDEEFF"/><path d="M3.5 5q6-1.5 12 .5v4.5q-6-1.5-12 0z" fill="#F8F8FF"/><path d="M4 10q6-1.8 12 0" stroke="#1A1030" stroke-width="1.3" fill="none"/><path d="M3 11.5q7-1.5 13.5 .5v3q-7-1.5-13.5 0z" fill="#FAFAF4"/><path d="M3.5 15.5q6-2.5 11.5-1.5" stroke="#200818" stroke-width="1.8" fill="none"/><path d="M3 16.5q6-1 12 0v1.5H3z" fill="#F4F0E0"/></svg><div class="t" style="left:835px;top:1003px;color:#fff;letter-spacing:0.15px">Frigate3</div><div style="left:949px;top:997px;width:139px;height:25px;border-radius:3px;background:linear-gradient(#4A8AF8 0,#3C7EF6 3px,#3679F0 20px,#2E6BE0 100%);border:1px solid #2458C8"></div><svg style="left:959px;top:1002px" width="16" height="18" viewBox="0 0 16 18"><path d="M3 3l10 0-2 13H5z" fill="#B09060" stroke="#604020"/><path d="M5 1v8M8 0v8M11 1v8" stroke="#D03030" stroke-width="2"/><path d="M6 3v6" stroke="#3060E0" stroke-width="1.5"/><path d="M10 3v6" stroke="#30C030" stroke-width="1.5"/></svg><div class="t" style="left:977px;top:1003px;color:#fff;letter-spacing:0.15px">untitled - Paint</div><div class="t" style="left:1098px;top:1003px;color:#fff">EN</div><div style="left:1134px;top:994px;width:146px;height:30px;background:linear-gradient(#1C9BF0 0,#24A8F8 3px,#0F8EE8 10px,#0D86E0 25px,#0A70C8 30px);border-left:1px solid #0E3DA0"></div><svg style="left:1125px;top:1000px" width="19" height="19" viewBox="0 0 19 19"><circle cx="9.5" cy="9.5" r="8.5" fill="#3C8CF0" stroke="#B8D8FF"/><path d="M11 5l-4 4.5 4 4.5" stroke="#fff" stroke-width="2.2" fill="none"/></svg><svg style="left:1145px;top:999px" width="17" height="18" viewBox="0 0 17 18"><path d="M9 1.5h4l1 2H9z" fill="#DDEEFF"/><path d="M3.5 5q6-1.5 12 .5v4.5q-6-1.5-12 0z" fill="#F8F8FF"/><path d="M4 10q6-1.8 12 0" stroke="#1A1030" stroke-width="1.3" fill="none"/><path d="M3 11.5q7-1.5 13.5 .5v3q-7-1.5-13.5 0z" fill="#FAFAF4"/><path d="M3.5 15.5q6-2.5 11.5-1.5" stroke="#200818" stroke-width="1.8" fill="none"/><path d="M3 16.5q6-1 12 0v1.5H3z" fill="#F4F0E0"/></svg><svg style="left:1163px;top:1001px" width="15" height="15" viewBox="0 0 15 15"><path d="M1 2h13L7.5 14z" fill="#38C038" stroke="#208020"/></svg><svg style="left:1181px;top:1000px" width="15" height="17" viewBox="0 0 15 17"><rect x="1" y="6" width="7" height="6" fill="#B8D8F8" stroke="#4070B0"/><rect x="7" y="1" width="7" height="6" fill="#B8D8F8" stroke="#4070B0"/><path d="M4 12v3M10 7v6" stroke="#506070"/></svg><svg style="left:1198px;top:1001px" width="15" height="15" viewBox="0 0 15 15"><circle cx="7.5" cy="7.5" r="7" fill="#fff" stroke="#2A7A2A"/><circle cx="7.5" cy="7.5" r="5" fill="#40A040"/><path d="M5 4v5q0 2 2.5 2t2.5-2V4" stroke="#fff" stroke-width="1.5" fill="none"/></svg><svg style="left:1216px;top:1001px" width="15" height="15" viewBox="0 0 15 15"><circle cx="7.5" cy="7.5" r="2.5" fill="#F0E020"/><g fill="#78D830"><circle cx="7.5" cy="2.5" r="2.3"/><circle cx="7.5" cy="12.5" r="2.3"/><circle cx="2.5" cy="7.5" r="2.3"/><circle cx="12.5" cy="7.5" r="2.3"/><circle cx="4" cy="4" r="2.3"/><circle cx="11" cy="11" r="2.3"/><circle cx="11" cy="4" r="2.3"/><circle cx="4" cy="11" r="2.3"/></g><circle cx="7.5" cy="7.5" r="2.5" fill="#F0E040"/></svg><div class="t" style="left:1238px;top:1003px;color:#fff">23:38</div></body></html>
